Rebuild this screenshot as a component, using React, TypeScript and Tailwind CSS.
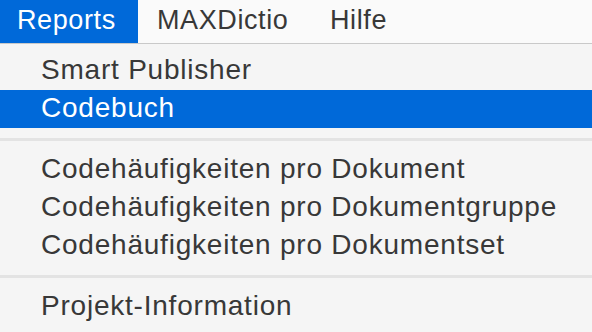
const font = { fontFamily: '"Liberation Sans", Arial, sans-serif' }

function Separator() {
  return <div className="my-[10px] h-[3px] bg-[#e3e3e3]" />
}

function Item({ label, active }: { label: string; active?: boolean }) {
  return (
    <div
      className={
        'flex h-[38px] items-center pl-[41px] pb-[3px] text-[28px] tracking-[0.78px] ' +
        (active ? 'bg-[#0069d9] text-white' : 'text-[#383838]')
      }
    >
      {label}
    </div>
  )
}

export default function App() {
  return (
    <main className="h-[332px] w-[592px] overflow-hidden bg-[#f5f5f5]" style={font}>
      <nav className="flex h-[44px] border-b border-[#c9c9c9] bg-[#fafafa] text-[27px] tracking-[0.6px] text-[#383838]">
        <div className="flex w-[138px] items-center bg-[#0069d9] pl-[17px] pb-[3px] text-white">Reports</div>
        <div className="flex w-[174px] items-center pl-[19px] pb-[3px]">MAXDictio</div>
        <div className="flex items-center pl-[18px] pb-[3px]">Hilfe</div>
      </nav>

      <div className="pt-[8px]">
        <Item label="Smart Publisher" />
        <Item label="Codebuch" active />
        <Separator />
        <Item label="Codehäufigkeiten pro Dokument" />
        <Item label="Codehäufigkeiten pro Dokumentgruppe" />
        <Item label="Codehäufigkeiten pro Dokumentset" />
        <Separator />
        <Item label="Projekt-Information" />
      </div>
    </main>
  )
}
